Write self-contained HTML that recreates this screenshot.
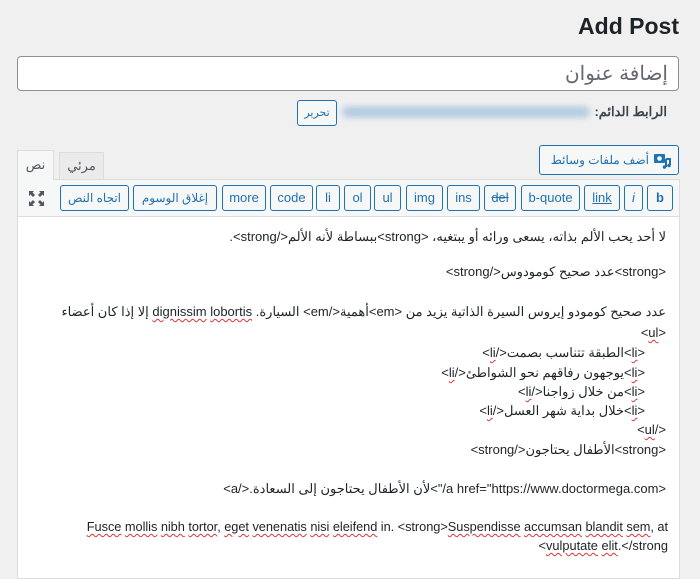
<!DOCTYPE html>
<html><head><meta charset="utf-8"><style>
*{box-sizing:border-box;margin:0;padding:0}
body{width:700px;height:568px;overflow:hidden;background:#f0f0f1;font-family:"Liberation Sans","Noto Sans CJK SC",sans-serif;color:#1d2327;position:relative}
.a{position:absolute}
h1{position:absolute;right:21px;top:13px;font-size:23px;font-weight:700;color:#1d2327}
.title{left:17px;top:56px;width:662px;height:35px;background:#fff;border:1px solid #8c8f94;border-radius:4px}
.title span{position:absolute;right:10px;top:4px;font-size:20px;color:#646970;direction:rtl}
.btn{position:absolute;border:1px solid #2271b1;border-radius:3px;color:#2271b1;background:#f6f7f7;font-size:13px;text-align:center;line-height:24px;height:26px;white-space:nowrap}
.line{position:absolute;right:34px;font-size:13px;direction:rtl;white-space:nowrap;color:#1d2327}
.sp{text-decoration:underline wavy #d63638;text-decoration-thickness:1px;text-underline-offset:2px}
</style></head><body>
<h1>Add Post</h1>
<div class="a title"><span>إضافة عنوان</span></div>
<div class="a" style="right:33px;top:104px;font-size:13px;font-weight:700;color:#3c434a;direction:rtl">الرابط الدائم:</div>
<div class="a" style="left:342px;top:106px;width:248px;height:12px;background:#b7cde0;border-radius:6px;filter:blur(3px)"></div>
<div class="btn" style="left:297px;top:100px;width:40px;font-size:11px">تحرير</div>
<div class="btn" style="left:539px;top:145px;width:140px;height:30px;line-height:28px;font-size:12px;direction:rtl;padding-right:29px;text-align:right">أضف ملفات وسائط
<svg style="position:absolute;right:7px;top:6px" width="18" height="17" viewBox="0 0 18 17"><rect x="1" y="2" width="11" height="9" rx="1" fill="#2271b1"/><circle cx="6.5" cy="6.5" r="2.3" fill="#fff"/><path d="M13 7v8M13 7l4 0v6" stroke="#2271b1" stroke-width="2" fill="none"/><circle cx="11.5" cy="15" r="1.8" fill="#2271b1"/><circle cx="16" cy="13.5" r="1.8" fill="#2271b1"/></svg></div>
<div class="a" style="left:59px;top:152px;width:45px;height:27px;background:#ebebeb;border:1px solid #dcdcde;border-bottom:none;font-size:13px;text-align:center;line-height:25px;color:#50575e">مرئي</div>
<div class="a" style="left:17px;top:150px;width:37px;height:30px;background:#f6f7f7;border:1px solid #dcdcde;border-bottom:none;font-size:13px;text-align:center;line-height:28px;color:#50575e;z-index:2">نص</div>
<div class="a" style="left:17px;top:179px;width:663px;height:400px;border:1px solid #dcdcde;background:#fff"></div>
<div class="a" style="left:18px;top:180px;width:661px;height:37px;background:#f6f7f7;border-bottom:1px solid #dcdcde"></div>
<div class="btn" style="left:647px;top:185px;width:26px;font-weight:700">b</div>
<div class="btn" style="left:624px;top:185px;width:19px;font-style:italic">i</div>
<div class="btn" style="left:584px;top:185px;width:36px;text-decoration:underline">link</div>
<div class="btn" style="left:521px;top:185px;width:59px">b-quote</div>
<div class="btn" style="left:484px;top:185px;width:32px;text-decoration:line-through">del</div>
<div class="btn" style="left:447px;top:185px;width:33px">ins</div>
<div class="btn" style="left:406px;top:185px;width:37px">img</div>
<div class="btn" style="left:374px;top:185px;width:27px">ul</div>
<div class="btn" style="left:344px;top:185px;width:27px">ol</div>
<div class="btn" style="left:316px;top:185px;width:24px">li</div>
<div class="btn" style="left:270px;top:185px;width:43px">code</div>
<div class="btn" style="left:222px;top:185px;width:44px">more</div>
<div class="btn" style="left:133px;top:185px;width:84px;font-size:12px">إغلاق الوسوم</div>
<div class="btn" style="left:60px;top:185px;width:69px;font-size:12px">اتجاه النص</div>
<svg class="a" style="left:28px;top:190px" width="17" height="17" viewBox="0 0 17 17" fill="#50575e"><path d="M1 1h5L4.5 2.5 7 5 5 7 2.5 4.5 1 6zM16 1v5l-1.5-1.5L12 7 10 5l2.5-2.5L11 1zM1 16v-5l1.5 1.5L5 10l2 2-2.5 2.5L6 16zM16 16h-5l1.5-1.5L10 12l2-2 2.5 2.5L16 11z"/></svg>
<div class="line" style="top:229px">لا أحد يحب الألم بذاته، يسعى ورائه أو يبتغيه، &lt;strong&gt;ببساطة لأنه الألم&lt;/strong&gt;.</div>
<div class="line" style="top:264px">&lt;strong&gt;عدد صحيح كومودوس&lt;/strong&gt;</div>
<div class="line" style="top:304px">عدد صحيح كومودو إيروس السيرة الذاتية يزيد من &lt;em&gt;أهمية&lt;/em&gt; السيارة. <span class="sp">dignissim</span> <span class="sp">lobortis</span> إلا إذا كان أعضاء</div>
<div class="line" style="top:325px">&lt;<span class="sp">ul</span>&gt;</div>
<div class="line" style="top:345px;right:55px">&lt;<span class="sp">li</span>&gt;الطبقة تتناسب بصمت&lt;/<span class="sp">li</span>&gt;</div>
<div class="line" style="top:365px;right:55px">&lt;<span class="sp">li</span>&gt;يوجهون رفاقهم نحو الشواطئ&lt;/<span class="sp">li</span>&gt;</div>
<div class="line" style="top:384px;right:55px">&lt;<span class="sp">li</span>&gt;من خلال زواجنا&lt;/<span class="sp">li</span>&gt;</div>
<div class="line" style="top:403px;right:55px">&lt;<span class="sp">li</span>&gt;خلال بداية شهر العسل&lt;/<span class="sp">li</span>&gt;</div>
<div class="line" style="top:422px">&lt;/<span class="sp">ul</span>&gt;</div>
<div class="line" style="top:442px">&lt;strong&gt;الأطفال يحتاجون&lt;/strong&gt;</div>
<div class="line" style="top:481px">&lt;a href="https://www.doctormega.com/"&gt;لأن الأطفال يحتاجون إلى السعادة.&lt;/a&gt;</div>
<div class="line" style="top:519px;right:32px;direction:ltr;font-size:12.8px;letter-spacing:-0.05px"><span class="sp">Fusce</span> <span class="sp">mollis</span> <span class="sp">nibh</span> <span class="sp">tortor</span>, <span class="sp">eget</span> <span class="sp">venenatis</span> <span class="sp">nisi</span> <span class="sp">eleifend</span> in. &lt;strong&gt;<span class="sp">Suspendisse</span> <span class="sp">accumsan</span> <span class="sp">blandit</span> <span class="sp">sem</span>, at</div>
<div class="line" style="top:538px;right:32px;direction:ltr;font-size:12.8px">&lt;<span class="sp">vulputate</span> <span class="sp">elit</span>.&lt;/strong</div>
</body></html>
